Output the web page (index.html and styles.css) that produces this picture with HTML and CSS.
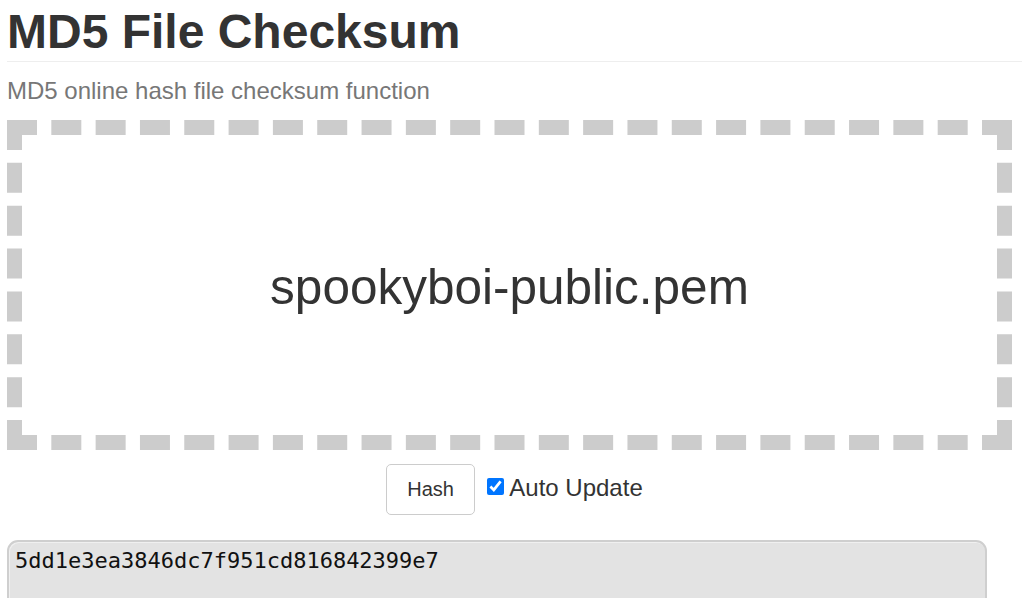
FILE: index.html
```html
<!DOCTYPE html>
<html>
<head>
<meta charset="utf-8">
<title>MD5 File Checksum</title>
<link rel="stylesheet" href="styles.css">
</head>
<body>
<div class="page">
  <h1 class="title">MD5 File Checksum</h1>
  <p class="subtitle">MD5 online hash file checksum function</p>
  <div class="dropzone"><span class="filename">spookyboi-public.pem</span></div>
  <div class="controls">
    <button class="btn" type="button">Hash</button>
    <label class="auto"><input type="checkbox" class="check" checked> Auto Update</label>
  </div>
  <textarea class="output" readonly>5dd1e3ea3846dc7f951cd816842399e7</textarea>
</div>
</body>
</html>
```

FILE: styles.css
```css
html, body {
  margin: 0;
  padding: 0;
  background: #fff;
  overflow: hidden;
}
body {
  font-family: "Liberation Sans", Arial, Helvetica, sans-serif;
  color: #333;
}
.page {
  padding-left: 7px;
  height: 598px;
  overflow: hidden;
}
.title {
  margin: 6px 0 0 0;
  font-size: 48px;
  line-height: 52px;
  font-weight: bold;
  color: #333;
  padding-bottom: 3px;
  border-bottom: 1px solid #eee;
}
.subtitle {
  margin: 14px 0 0 0;
  font-size: 24px;
  line-height: 30px;
  color: #777;
}
.dropzone {
  margin: 14px 10px 0 0;
  height: 300px;
  border: 15px dashed #ccc;
  display: flex;
  align-items: center;
  justify-content: center;
}
.filename {
  font-size: 49.5px;
  padding-top: 3px;
  color: #333;
}
.controls {
  margin: 14px 10px 0 0;
  padding-left: 10px;
  display: flex;
  justify-content: center;
  align-items: baseline;
}
.btn {
  font-family: "Liberation Sans", Arial, sans-serif;
  font-size: 20px;
  line-height: 25px;
  padding: 12px 20px;
  background: #fff;
  color: #333;
  border: 1px solid #ccc;
  border-radius: 5px;
  margin: 0 12px 0 0;
}
.auto {
  font-size: 24px;
  color: #333;
}
.check {
  width: 17px;
  height: 17px;
  margin: 0;
  vertical-align: 1px;
  accent-color: #0075ff;
}
.output {
  display: block;
  margin-top: 25px;
  width: 980px;
  height: 120px;
  box-sizing: border-box;
  background: #e3e3e3;
  border: 2px solid #cfcfcf;
  box-shadow: inset 1px 1px 0 #f0f0f0;
  border-radius: 11px;
  padding: 6px 6px;
  font-family: "DejaVu Sans Mono", Consolas, monospace;
  font-size: 22px;
  line-height: 26px;
  color: #111;
  resize: none;
}
```
